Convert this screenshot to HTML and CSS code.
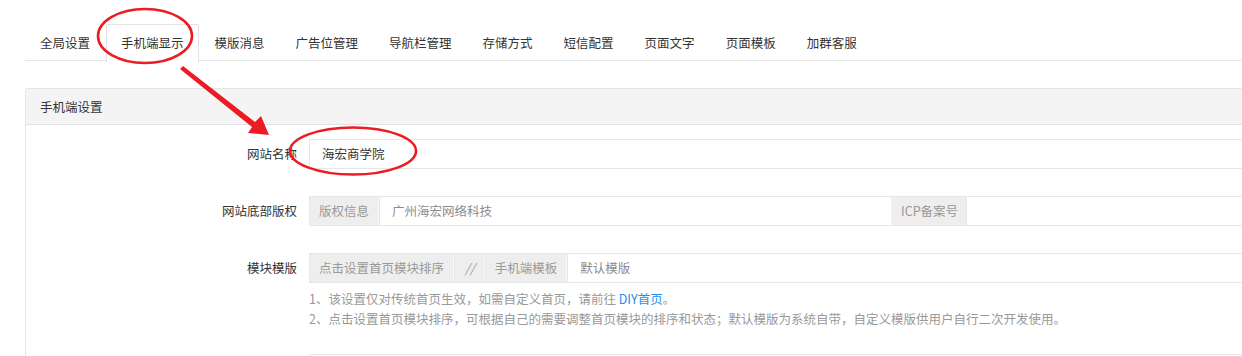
FILE: index.html
```html
<!DOCTYPE html>
<html lang="zh-CN">
<head>
<meta charset="utf-8">
<title>手机端显示</title>
<link rel="stylesheet" href="styles.css">
</head>
<body>
<div class="page">
  <ul class="tabs">
    <li class="tab">全局设置</li>
    <li class="tab active">手机端显示</li>
    <li class="tab">模版消息</li>
    <li class="tab">广告位管理</li>
    <li class="tab">导航栏管理</li>
    <li class="tab">存储方式</li>
    <li class="tab">短信配置</li>
    <li class="tab">页面文字</li>
    <li class="tab">页面模板</li>
    <li class="tab">加群客服</li>
  </ul>

  <div class="panel">
    <div class="panel-head">手机端设置</div>
    <div class="panel-body">
      <div class="form-item">
        <label class="label">网站名称</label>
        <div class="field">
          <div class="input value-dark">海宏商学院</div>
        </div>
      </div>

      <div class="form-item">
        <label class="label">网站底部版权</label>
        <div class="field">
          <span class="addon">版权信息</span>
          <div class="input copy-input">广州海宏网络科技</div>
          <span class="addon icp">ICP备案号</span>
          <div class="input grow"></div>
        </div>
      </div>

      <div class="form-item">
        <label class="label">模块模版</label>
        <div class="field">
          <span class="addon">点击设置首页模块排序</span>
          <span class="addon slash">//</span>
          <span class="addon">手机端模板</span>
          <div class="input grow">默认模版</div>
        </div>
      </div>

      <div class="help">
        <p>1、该设置仅对传统首页生效，如需自定义首页，请前往 <a class="link">DIY首页</a>。</p>
        <p>2、点击设置首页模块排序，可根据自己的需要调整首页模块的排序和状态；默认模版为系统自带，自定义模版供用户自行二次开发使用。</p>
      </div>

      <div class="form-item next">
        <label class="label"></label>
        <div class="field">
          <div class="input grow"></div>
        </div>
      </div>
    </div>
  </div>
</div>

<svg class="marks" width="1242" height="356" viewBox="0 0 1242 356" xmlns="http://www.w3.org/2000/svg">
  <ellipse cx="145" cy="36" rx="47" ry="27" fill="none" stroke="#ec1c24" stroke-width="2.6"/>
  <ellipse cx="353" cy="151" rx="63" ry="23.5" fill="none" stroke="#ec1c24" stroke-width="2.6"/>
  <polygon points="180,69 183,66 255,122 261,116 269,135 248,133 252,127" fill="#ec1c24"/>
</svg>
</body>
</html>
```

FILE: styles.css
```css
html, body {
  margin: 0;
  padding: 0;
  background: #ffffff;
  overflow: hidden;
}

body {
  font-family: "Noto Sans CJK SC", "Noto Sans", "Liberation Sans", sans-serif;
  font-size: 12.5px;
  color: #333333;
}

.page {
  padding: 24px 0 0 25px;
  width: 1300px;
}

.tabs {
  list-style: none;
  margin: 0;
  padding: 0;
  display: flex;
  gap: 1px;
  height: 36px;
  border-bottom: 1px solid #e6e6e6;
}

.tab {
  padding: 0 14px;
  height: 36px;
  line-height: 36px;
  border: 1px solid transparent;
  border-bottom: 0;
  color: #333333;
  white-space: nowrap;
}

.tab.active {
  border-color: #e2e2e2;
  border-radius: 2px 2px 0 0;
  background: #ffffff;
  height: 37px;
  margin-bottom: -1px;
}

.panel {
  margin-top: 27px;
  border: 1px solid #e6e6e6;
  border-radius: 2px;
}

.panel-head {
  height: 35px;
  line-height: 35px;
  padding-left: 14px;
  background: #f4f4f4;
  border-bottom: 1px solid #e2e2e2;
  color: #333333;
}

.panel-body {
  padding-top: 14px;
  display: flex;
  flex-direction: column;
  gap: 27px;
}

.form-item {
  display: flex;
  height: 30px;
}

.label {
  width: 283px;
  flex: none;
  box-sizing: border-box;
  padding-right: 12px;
  text-align: right;
  line-height: 30px;
  color: #333333;
}

.field {
  flex: 1;
  display: flex;
  min-width: 0;
}

.input {
  flex: 1;
  box-sizing: border-box;
  height: 30px;
  line-height: 28px;
  padding: 0 12px;
  border: 1px solid #e6e6e6;
  color: #8c8c8c;
  white-space: nowrap;
}

.input.value-dark {
  color: #333333;
}

.input.copy-input {
  flex: none;
  width: 512px;
  border-right: 0;
}

.input.grow {
  flex: 1;
}

.addon {
  flex: none;
  box-sizing: border-box;
  height: 30px;
  line-height: 28px;
  padding: 0 9px;
  background: #eeeeee;
  border: 1px solid #e6e6e6;
  border-right: 1px solid #f6f6f6;
  color: #999999;
  white-space: nowrap;
}

.addon.icp {
  padding: 0 8px 0 9px;
  border-right: 0;
  border-left: 1px solid #f2f2f2;
}

.addon.slash {
  padding: 0 9px 0 10px;
  font-style: italic;
}

.help {
  margin: -21px 0 0 283px;
  color: #999999;
  line-height: 20px;
}

.help p {
  margin: 0;
  white-space: nowrap;
}

.link {
  color: #2d8cf0;
}

.form-item.next {
  margin-top: -2px;
}

.marks {
  position: absolute;
  left: 0;
  top: 0;
  pointer-events: none;
}
```
